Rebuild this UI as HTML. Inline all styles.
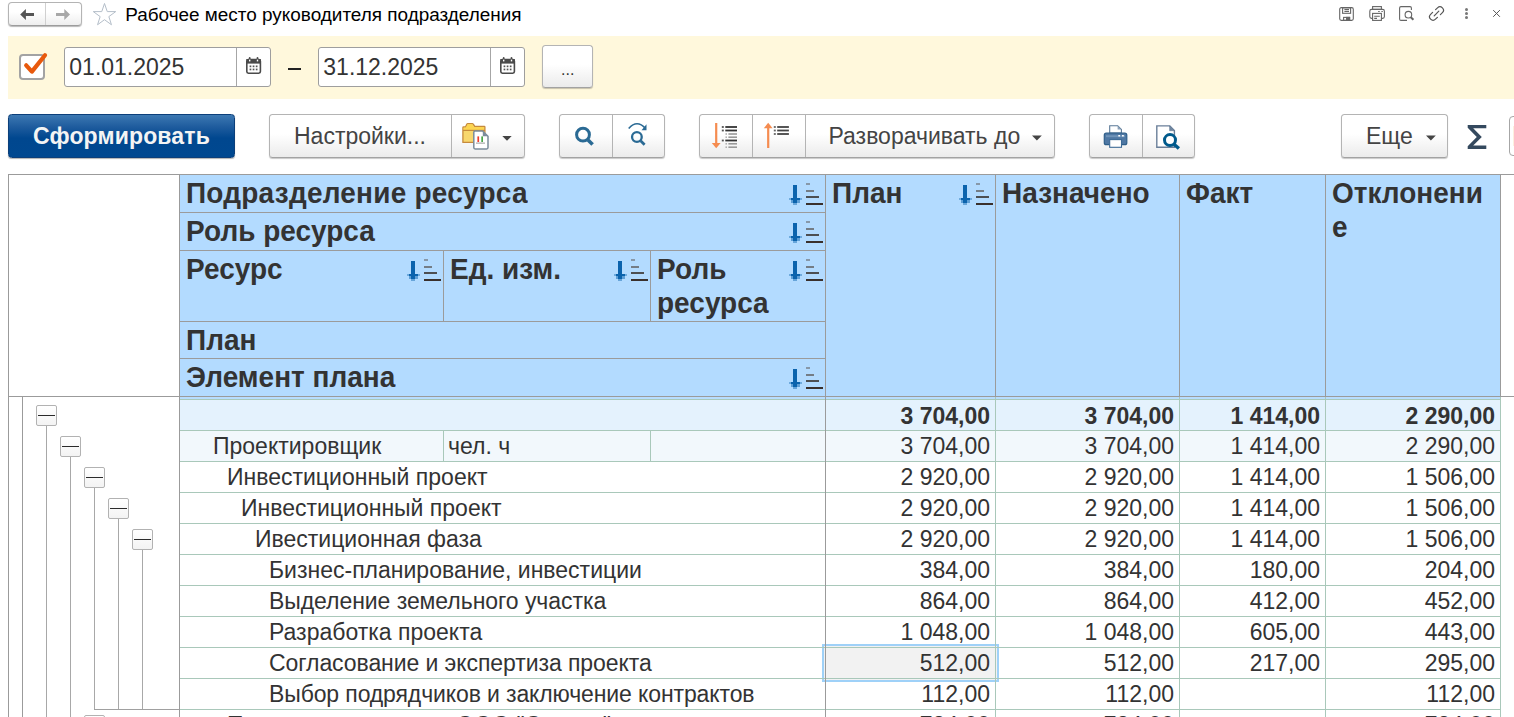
<!DOCTYPE html>
<html lang="ru"><head><meta charset="utf-8"><title>Рабочее место руководителя подразделения</title>
<style>
*{box-sizing:border-box;margin:0;padding:0}
html,body{width:1514px;height:717px;overflow:hidden;background:#fff}
body{position:relative;font-family:"Liberation Sans",sans-serif;font-size:23px;color:#333}
.abs{position:absolute}
.btn{position:absolute;top:114px;height:44px;border:1px solid #b4b4b4;border-bottom-color:#a2a2a2;border-radius:3.5px;background:linear-gradient(#ffffff 0%,#ffffff 45%,#ebebeb 100%);box-shadow:0 1px 1px rgba(0,0,0,.22)}
.btn .sep{position:absolute;top:0;bottom:0;width:1px;background:#b4b4b4}
.btn .t{position:absolute;top:0;height:42px;line-height:42px;white-space:nowrap;color:#444;font-size:23px}
.inp{position:absolute;top:47px;height:40px;background:#fff;border:1px solid #9e9e9e;border-radius:3px}
.inp .sep{position:absolute;top:0;bottom:0;width:1px;background:#a6a6a6}
.inp .t{position:absolute;left:4.3px;top:0;height:38px;line-height:38px;font-size:23px;color:#333;white-space:nowrap}
.hd{position:absolute;background:#b3dbff}
.ht{position:absolute;font-weight:bold;font-size:28px;line-height:38px;color:#333;white-space:nowrap;transform:scaleY(1.04);transform-origin:0 28px}
.ht[style*="line-height:34px"]{transform-origin:0 26px}
.vl{position:absolute;width:1px;background:#9b9b9b}
.hl{position:absolute;height:1px;background:#9b9b9b}
.gv{position:absolute;width:1px;background:#a9c8ba}
.gh{position:absolute;height:1px;background:#a9c8ba}
.tb{position:absolute;width:21px;height:21px;border:1px solid #b2b2b2;border-radius:2px;background:linear-gradient(#fff,#f3f3f3)}
.tb i{position:absolute;left:1px;right:1px;top:9px;height:1px;background:#2a2a2a}
.rt{position:absolute;height:31px;line-height:31px;font-size:23px;white-space:nowrap;color:#333}
.num{text-align:right}
.b{font-weight:bold}
</style></head><body>

<!-- title bar -->
<div class="abs" style="left:8px;top:2px;width:74px;height:24px;border:1px solid #b4b4b4;border-bottom-color:#9c9c9c;border-radius:4px;background:linear-gradient(#fff 40%,#eee);box-shadow:0 1px 1px rgba(0,0,0,.28)">
<div class="abs" style="left:36px;top:0;bottom:0;width:1px;background:#d0d0d0"></div>
<svg class="abs" style="left:0;top:0" width="72" height="22" viewBox="9 3 72 22"><path d="M20.2 14.4L25.9 9v3.9H34v3.1H25.9V20z" fill="#555"/><path d="M70 14.4L64.3 9v3.9H56v3.1h8.3V20z" fill="#a8a8a8"/></svg>
</div>
<svg class="abs" style="left:91px;top:1px" width="27" height="27" viewBox="91 1.7 27 27"><path d="M104.5 4.2l2.75 8.1h8.45l-6.85 5 2.6 8.15-6.95-5.05-6.95 5.05 2.6-8.15-6.85-5h8.45z" fill="#fff" stroke="#b4bec9" stroke-width="1"/></svg>
<div class="abs" style="left:125.2px;top:3px;height:24px;line-height:24px;font-size:18.93px;color:#000;white-space:nowrap">Рабочее место руководителя подразделения</div>

<svg class="abs" style="left:1334px;top:2px" width="176" height="24" viewBox="1334 2 176 24" fill="none" stroke="#666" stroke-width="1.1">
<rect x="1339.7" y="7.6" width="13.6" height="12.8" rx="1.6"/><rect x="1342.6" y="7.8" width="8" height="5.5"/><path d="M1344.4 9.6h4.6M1344.4 11.5h4.6"/><rect x="1343.6" y="17.4" width="6" height="3"/><rect x="1346.6" y="17.4" width="3" height="3" fill="#666"/>
<rect x="1372.6" y="6.6" width="8.8" height="2.8"/><rect x="1369.8" y="9.4" width="14.6" height="9" rx="1.8"/><rect x="1372.6" y="13.4" width="8.8" height="7" fill="#fff"/><path d="M1374.2 16.3h5.6M1374.2 18.4h2.8M1378.2 11.5h1.5M1381.4 11.5h1.4"/>
<path d="M1411.4 10V8q0-1.4-1.4-1.4h-9q-1.4 0-1.4 1.4v11q0 1.4 1.4 1.4h6"/><circle cx="1408.4" cy="14.7" r="3.3"/><path d="M1410.8 17.2l2.6 2.5" stroke-width="2"/>
<path d="M1435.6 9.7l1.9-1.9a3.4 3.4 0 0 1 4.9 4.9l-2 2M1437.4 17.3l-1.9 1.9a3.4 3.4 0 0 1-4.9-4.9l2-2M1434.2 15.8l4.6-4.6" stroke="#555" stroke-width="1.2" stroke-linecap="round"/>
<g fill="#777" stroke="none"><circle cx="1466.5" cy="9.4" r="1.5"/><circle cx="1466.5" cy="13.5" r="1.5"/><circle cx="1466.5" cy="17.6" r="1.5"/></g>
<path d="M1493.2 10.1l6.7 6.7M1499.9 10.1l-6.7 6.7" stroke="#555" stroke-width="1"/>
</svg>

<!-- period band -->
<div class="abs" style="left:8px;top:36px;width:1506px;height:63px;background:#fff8dc"></div>
<div class="abs" style="left:19px;top:54px;width:26px;height:26px;border:2px solid #a3a3a3;border-radius:4px;background:#fff"></div>
<svg class="abs" style="left:19px;top:50px" width="32" height="32" viewBox="19 50 32 32"><path d="M26.2 65.3l5.7 6.3L45 55.2" fill="none" stroke="#e8590c" stroke-width="4.2" stroke-linecap="round" stroke-linejoin="round"/></svg>
<div class="inp" style="left:64px;width:207px"><div class="t">01.01.2025</div><div class="sep" style="left:171px"></div>
<svg class="abs" style="left:179px;top:8px" width="18" height="20" viewBox="244 56 18 20"><rect x="246.8" y="59.6" width="13.6" height="13.6" rx="1.6" fill="#fff" stroke="#4a4a4a" stroke-width="1.6"/><rect x="246.4" y="59" width="14.4" height="4.6" fill="#4a4a4a"/><rect x="248.8" y="57" width="1.8" height="3.2" rx=".9" fill="#4a4a4a"/><rect x="256.6" y="57" width="1.8" height="3.2" rx=".9" fill="#4a4a4a"/><rect x="249" y="59.6" width="1.4" height="1.8" fill="#fff"/><rect x="256.8" y="59.6" width="1.4" height="1.8" fill="#fff"/><g fill="#555"><rect x="249.6" y="65.5" width="1.7" height="1.7"/><rect x="252.7" y="65.5" width="1.7" height="1.7"/><rect x="255.8" y="65.5" width="1.7" height="1.7"/><rect x="249.6" y="68.6" width="1.7" height="1.7"/><rect x="252.7" y="68.6" width="1.7" height="1.7"/><rect x="255.8" y="68.6" width="1.7" height="1.7"/></g></svg></div>
<div class="abs" style="left:288px;top:68px;width:13px;height:2px;background:#222"></div>
<div class="inp" style="left:318px;width:207px"><div class="t">31.12.2025</div><div class="sep" style="left:171px"></div>
<svg class="abs" style="left:179px;top:8px" width="18" height="20" viewBox="244 56 18 20"><rect x="246.8" y="59.6" width="13.6" height="13.6" rx="1.6" fill="#fff" stroke="#4a4a4a" stroke-width="1.6"/><rect x="246.4" y="59" width="14.4" height="4.6" fill="#4a4a4a"/><rect x="248.8" y="57" width="1.8" height="3.2" rx=".9" fill="#4a4a4a"/><rect x="256.6" y="57" width="1.8" height="3.2" rx=".9" fill="#4a4a4a"/><rect x="249" y="59.6" width="1.4" height="1.8" fill="#fff"/><rect x="256.8" y="59.6" width="1.4" height="1.8" fill="#fff"/><g fill="#555"><rect x="249.6" y="65.5" width="1.7" height="1.7"/><rect x="252.7" y="65.5" width="1.7" height="1.7"/><rect x="255.8" y="65.5" width="1.7" height="1.7"/><rect x="249.6" y="68.6" width="1.7" height="1.7"/><rect x="252.7" y="68.6" width="1.7" height="1.7"/><rect x="255.8" y="68.6" width="1.7" height="1.7"/></g></svg></div>
<div class="btn" style="left:542px;top:45px;width:51px;height:43px"><div class="t" style="left:18px;top:5px;font-size:16px;line-height:38px;height:38px;color:#333">...</div></div>

<!-- command bar -->
<div class="abs" style="left:8px;top:114px;width:227px;height:44px;border:1px solid #0c3f7a;border-radius:3.5px;background:linear-gradient(#3c78b2 0%,#1f5c9e 28%,#00478f 55%,#004890 100%);box-shadow:0 1px 1px rgba(0,0,0,.3)"><div class="abs" style="left:0;right:0;top:0;height:42px;line-height:42px;text-align:center;color:#f4f4f4;font-weight:bold;font-size:23px;letter-spacing:.150px">Сформировать</div></div>
<div class="btn" style="left:269px;width:256px"><div class="t" style="left:24px">Настройки...</div><div class="sep" style="left:181px"></div>
<svg class="abs" style="left:190px;top:6px" width="56" height="32" viewBox="460 121 56 32"><path d="M462.9 142.4v-14.8q0-.6.6-.6h2l1.4-2.9q.3-.5.9-.5h4.6q.6 0 .9.5l1.4 2.2h9.6q.6 0 .6.6v15.5z" fill="#f8d76e" stroke="#c68a3c" stroke-width="1.3" stroke-linejoin="round"/><path d="M463.6 130.4v-2.8h2.4l1.6-3.3h4.5l1.7 2.7h10.1v3.4z" fill="#fcd550"/><path d="M463 130.4h22" stroke="#c68a3c" stroke-width="1.2"/><path d="M474 131h8.6l5.4 5.2v11.4q0 1.3-1.3 1.3h-11.6q-1.3 0-1.3-1.3v-15.3q0-1.3 1.3-1.3z" fill="#fff" stroke="#7b8c9b" stroke-width="1.5"/><path d="M482.8 131.2v5h5z" fill="#7b8c9b"/><rect x="477.4" y="136.4" width="1.7" height="5.6" fill="#ee3b2b"/><rect x="481.3" y="136.4" width="1.7" height="5.6" fill="#46a546"/><rect x="476" y="142.6" width="9" height="1" fill="#999"/><path d="M502.3 136.1h9.4l-4.7 4.7z" fill="#444"/></svg></div>
<div class="btn" style="left:559px;width:106px"><div class="sep" style="left:52px"></div>
<svg class="abs" style="left:0;top:0" width="104" height="42" viewBox="560 115 104 42" fill="none" stroke="#2a6a94"><circle cx="583" cy="134.7" r="6.4" stroke-width="3"/><path d="M588 139.9l4.6 4.6" stroke-width="3.6"/><circle cx="636.9" cy="137" r="4.85" stroke-width="2.3"/><path d="M640.6 140.8l4 4" stroke-width="2.8"/><path d="M628.7 128.5q8.3-9.5 16.8 0" stroke-width="1.6"/><path d="M646.5 124.2v6h-5z" fill="#2a6a94" stroke="none"/></svg></div>

<div class="btn" style="left:699px;width:356px"><div class="sep" style="left:52px"></div><div class="sep" style="left:105px"></div>
<svg class="abs" style="left:0;top:0" width="104" height="42" viewBox="700 115 104 42"><rect x="715.1" y="123" width="2.2" height="21" fill="#f58c50"/><path d="M711.8 143h8.8l-4.4 5.3z" fill="#f58c50"/><rect x="721.8" y="126.1" width="2" height="1.8" fill="#555"/><rect x="725.3" y="126.1" width="11.7" height="1.8" fill="#333"/><rect x="721.8" y="129.6" width="2" height="1.8" fill="#555"/><rect x="725.3" y="129.6" width="11.7" height="1.8" fill="#333"/><rect x="725.5" y="133.2" width="1.4" height="1.6" fill="#aaa"/><rect x="728.4" y="133.2" width="8.6" height="1.6" fill="#999"/><rect x="725.5" y="136.4" width="1.4" height="1.6" fill="#aaa"/><rect x="728.4" y="136.4" width="8.6" height="1.6" fill="#999"/><rect x="721.8" y="139.6" width="2" height="1.8" fill="#555"/><rect x="725.3" y="139.6" width="11.7" height="1.8" fill="#333"/><rect x="725.5" y="143" width="1.4" height="1.6" fill="#aaa"/><rect x="728.4" y="143" width="8.6" height="1.6" fill="#999"/><rect x="725.5" y="146.4" width="1.4" height="1.6" fill="#aaa"/><rect x="728.4" y="146.4" width="8.6" height="1.6" fill="#999"/><rect x="767.1" y="127.5" width="2.2" height="20.5" fill="#f58c50"/><path d="M763.8 128.3h8.8l-4.4-5.5z" fill="#f58c50"/><rect x="773.8" y="126.1" width="2" height="1.8" fill="#666"/><rect x="777.1999999999999" y="126.1" width="11.7" height="1.8" fill="#444"/><rect x="773.8" y="129.6" width="2" height="1.8" fill="#666"/><rect x="777.1999999999999" y="129.6" width="11.7" height="1.8" fill="#444"/><rect x="773.8" y="133.1" width="2" height="1.8" fill="#666"/><rect x="777.1999999999999" y="133.1" width="11.7" height="1.8" fill="#444"/></svg>
<div class="t" style="left:128.5px">Разворачивать до</div>
<svg class="abs" style="left:331px;top:20px" width="12" height="7" viewBox="0 0 12 7"><path d="M1 .600h9.8l-4.9 5z" fill="#444"/></svg></div>

<div class="btn" style="left:1089px;width:106px"><div class="sep" style="left:52px"></div>
<svg class="abs" style="left:0;top:0" width="104" height="42" viewBox="1090 115 104 42"><path d="M1109.7 133v-7.3h8l3.7 3.7v3.6z" fill="#fff" stroke="#5a7896" stroke-width="1.1"/><path d="M1117.6 125.8v3.7h3.7z" fill="#8aa0b8"/><rect x="1104.3" y="133.2" width="22.5" height="11.5" rx="2" fill="#4f78a4" stroke="#2f5f8a" stroke-width="1.2"/><rect x="1106" y="135.2" width="19" height="2" fill="#7fa0c2" opacity=".7"/><rect x="1118.3" y="135" width="1.8" height="1.5" fill="#fff"/><rect x="1122" y="135" width="1.8" height="1.5" fill="#fff"/><rect x="1109.7" y="139.6" width="11.8" height="7.7" fill="#fff" stroke="#3d6a96" stroke-width="1.1"/>
<path d="M1156.8 125.9h13l4.6 4.6v16.7h-17.6z" fill="#fff" stroke="#6a7f99" stroke-width="1.4"/><path d="M1169.6 125.9v4.8h4.8z" fill="#6f86a0" stroke="#6a7f99" stroke-width=".6"/><circle cx="1170" cy="140.1" r="5.5" fill="#fff" stroke="#005a8c" stroke-width="3"/><path d="M1174.3 144.5l4.6 4" stroke="#005a8c" stroke-width="3.4"/></svg></div>
<div class="btn" style="left:1341px;width:107px"><div class="t" style="left:24px">Еще</div><svg class="abs" style="left:83px;top:20px" width="12" height="7" viewBox="0 0 12 7"><path d="M1 .600h9.8l-4.9 5z" fill="#444"/></svg></div>
<svg class="abs" style="left:1464px;top:121px" width="26" height="32" viewBox="1464 121 26 32"><path d="M1467.7 124.9h18.6v3.4h-13.1l8.6 8.65-8.6 8.65h13.1v3.4h-18.6v-2.8l9.1-9.25-9.1-9.25z" fill="#34495e"/></svg>
<div class="abs" style="left:1509px;top:116px;width:20px;height:40px;border:1px solid #a6a6a6;border-radius:4px;background:#fff"><div class="abs" style="left:3px;top:9px;width:20px;height:20px;background:#fdf0df"></div></div>

<!-- table header -->
<div class="hd" style="left:180px;top:175px;width:1320px;height:222px"></div>
<div class="hd" style="left:180px;top:397px;width:1320px;height:2px;background:#b7ddff"></div>

<div class="hl" style="left:8px;top:174px;width:1506px"></div>
<div class="hl" style="left:8px;top:396px;width:1506px"></div>
<div class="hl" style="left:179px;top:212px;width:647px"></div>
<div class="hl" style="left:179px;top:250px;width:647px"></div>
<div class="hl" style="left:179px;top:321px;width:647px"></div>
<div class="hl" style="left:179px;top:358px;width:647px"></div>
<div class="vl" style="left:8px;top:174px;height:543px"></div>
<div class="vl" style="left:22px;top:396px;height:321px"></div>
<div class="vl" style="left:179px;top:174px;height:543px"></div>
<div class="vl" style="left:825px;top:174px;height:543px"></div>
<div class="vl" style="left:995px;top:174px;height:223px"></div>
<div class="vl" style="left:1179px;top:174px;height:223px"></div>
<div class="vl" style="left:1325px;top:174px;height:223px"></div>
<div class="vl" style="left:1500px;top:174px;height:223px"></div>
<div class="vl" style="left:443px;top:250px;height:71px"></div>
<div class="vl" style="left:650px;top:250px;height:71px"></div>
<div class="ht" style="left:186px;top:175px;letter-spacing:.22px">Подразделение ресурса</div><svg class="abs" style="left:788px;top:182px" width="36" height="24" viewBox="0 0 36 24" shape-rendering="crispEdges"><g fill="#0b63ad"><rect x="5" y="3" width="4" height="18"/><rect x="5" y="21" width="4" height="2" opacity=".45"/><rect x="3" y="16" width="9" height="2"/><rect x="1" y="16" width="2" height="2" opacity=".4"/><rect x="12" y="16" width="2" height="2" opacity=".4"/><rect x="3" y="18" width="9" height="3" opacity=".5"/></g><rect x="18" y="1" width="4" height="2" fill="#8798a9"/><rect x="18" y="8" width="8" height="2" fill="#747d86"/><rect x="18" y="14" width="13" height="2" fill="#4d4f52"/><rect x="18" y="21" width="17" height="2" fill="#3a302c"/></svg>
<div class="ht" style="left:186px;top:213px">Роль ресурса</div><svg class="abs" style="left:788px;top:220px" width="36" height="24" viewBox="0 0 36 24" shape-rendering="crispEdges"><g fill="#0b63ad"><rect x="5" y="3" width="4" height="18"/><rect x="5" y="21" width="4" height="2" opacity=".45"/><rect x="3" y="16" width="9" height="2"/><rect x="1" y="16" width="2" height="2" opacity=".4"/><rect x="12" y="16" width="2" height="2" opacity=".4"/><rect x="3" y="18" width="9" height="3" opacity=".5"/></g><rect x="18" y="1" width="4" height="2" fill="#8798a9"/><rect x="18" y="8" width="8" height="2" fill="#747d86"/><rect x="18" y="14" width="13" height="2" fill="#4d4f52"/><rect x="18" y="21" width="17" height="2" fill="#3a302c"/></svg>
<div class="ht" style="left:186px;top:253px;line-height:34px">Ресурс</div><svg class="abs" style="left:406px;top:258px" width="36" height="24" viewBox="0 0 36 24" shape-rendering="crispEdges"><g fill="#0b63ad"><rect x="5" y="3" width="4" height="18"/><rect x="5" y="21" width="4" height="2" opacity=".45"/><rect x="3" y="16" width="9" height="2"/><rect x="1" y="16" width="2" height="2" opacity=".4"/><rect x="12" y="16" width="2" height="2" opacity=".4"/><rect x="3" y="18" width="9" height="3" opacity=".5"/></g><rect x="18" y="1" width="4" height="2" fill="#8798a9"/><rect x="18" y="8" width="8" height="2" fill="#747d86"/><rect x="18" y="14" width="13" height="2" fill="#4d4f52"/><rect x="18" y="21" width="17" height="2" fill="#3a302c"/></svg>
<div class="ht" style="left:450px;top:253px;line-height:34px">Ед. изм.</div><svg class="abs" style="left:613px;top:258px" width="36" height="24" viewBox="0 0 36 24" shape-rendering="crispEdges"><g fill="#0b63ad"><rect x="5" y="3" width="4" height="18"/><rect x="5" y="21" width="4" height="2" opacity=".45"/><rect x="3" y="16" width="9" height="2"/><rect x="1" y="16" width="2" height="2" opacity=".4"/><rect x="12" y="16" width="2" height="2" opacity=".4"/><rect x="3" y="18" width="9" height="3" opacity=".5"/></g><rect x="18" y="1" width="4" height="2" fill="#8798a9"/><rect x="18" y="8" width="8" height="2" fill="#747d86"/><rect x="18" y="14" width="13" height="2" fill="#4d4f52"/><rect x="18" y="21" width="17" height="2" fill="#3a302c"/></svg>
<div class="ht" style="left:657px;top:253px;line-height:34px">Роль</div><div class="ht" style="left:657px;top:287px;line-height:34px">ресурса</div><svg class="abs" style="left:788px;top:258px" width="36" height="24" viewBox="0 0 36 24" shape-rendering="crispEdges"><g fill="#0b63ad"><rect x="5" y="3" width="4" height="18"/><rect x="5" y="21" width="4" height="2" opacity=".45"/><rect x="3" y="16" width="9" height="2"/><rect x="1" y="16" width="2" height="2" opacity=".4"/><rect x="12" y="16" width="2" height="2" opacity=".4"/><rect x="3" y="18" width="9" height="3" opacity=".5"/></g><rect x="18" y="1" width="4" height="2" fill="#8798a9"/><rect x="18" y="8" width="8" height="2" fill="#747d86"/><rect x="18" y="14" width="13" height="2" fill="#4d4f52"/><rect x="18" y="21" width="17" height="2" fill="#3a302c"/></svg>
<div class="ht" style="left:186px;top:322px">План</div>
<div class="ht" style="left:186px;top:359px">Элемент плана</div><svg class="abs" style="left:788px;top:366px" width="36" height="24" viewBox="0 0 36 24" shape-rendering="crispEdges"><g fill="#0b63ad"><rect x="5" y="3" width="4" height="18"/><rect x="5" y="21" width="4" height="2" opacity=".45"/><rect x="3" y="16" width="9" height="2"/><rect x="1" y="16" width="2" height="2" opacity=".4"/><rect x="12" y="16" width="2" height="2" opacity=".4"/><rect x="3" y="18" width="9" height="3" opacity=".5"/></g><rect x="18" y="1" width="4" height="2" fill="#8798a9"/><rect x="18" y="8" width="8" height="2" fill="#747d86"/><rect x="18" y="14" width="13" height="2" fill="#4d4f52"/><rect x="18" y="21" width="17" height="2" fill="#3a302c"/></svg>
<div class="ht" style="left:832px;top:175px">План</div><svg class="abs" style="left:958px;top:182px" width="36" height="24" viewBox="0 0 36 24" shape-rendering="crispEdges"><g fill="#0b63ad"><rect x="5" y="3" width="4" height="18"/><rect x="5" y="21" width="4" height="2" opacity=".45"/><rect x="3" y="16" width="9" height="2"/><rect x="1" y="16" width="2" height="2" opacity=".4"/><rect x="12" y="16" width="2" height="2" opacity=".4"/><rect x="3" y="18" width="9" height="3" opacity=".5"/></g><rect x="18" y="1" width="4" height="2" fill="#8798a9"/><rect x="18" y="8" width="8" height="2" fill="#747d86"/><rect x="18" y="14" width="13" height="2" fill="#4d4f52"/><rect x="18" y="21" width="17" height="2" fill="#3a302c"/></svg>
<div class="ht" style="left:1002px;top:175px">Назначено</div>
<div class="ht" style="left:1186px;top:175px">Факт</div>
<div class="ht" style="left:1332px;top:177px;line-height:34px">Отклонени</div><div class="ht" style="left:1332px;top:211px;line-height:34px">е</div>
<!-- data rows -->
<div class="abs" style="left:180px;top:400px;width:1320px;height:30px;background:#e4f2fd"></div>
<div class="abs" style="left:180px;top:431px;width:1320px;height:30px;background:#f2f8fc"></div>
<div class="abs" style="left:822px;top:644px;width:177px;height:38px;border:2px solid #9fd1f8;background:#f2f2f2"></div>
<div class="gh" style="left:180px;top:399px;width:1320px"></div>
<div class="gh" style="left:180px;top:430px;width:1320px"></div>
<div class="gh" style="left:180px;top:461px;width:1320px"></div>
<div class="gh" style="left:180px;top:492px;width:1320px"></div>
<div class="gh" style="left:180px;top:523px;width:1320px"></div>
<div class="gh" style="left:180px;top:554px;width:1320px"></div>
<div class="gh" style="left:180px;top:585px;width:1320px"></div>
<div class="gh" style="left:180px;top:616px;width:1320px"></div>
<div class="gh" style="left:180px;top:647px;width:1320px"></div>
<div class="gh" style="left:180px;top:678px;width:1320px"></div>
<div class="gh" style="left:180px;top:709px;width:1320px"></div>
<div class="gv" style="left:995px;top:397px;height:320px"></div>
<div class="gv" style="left:1179px;top:397px;height:320px"></div>
<div class="gv" style="left:1325px;top:397px;height:320px"></div>
<div class="gv" style="left:1500px;top:397px;height:320px"></div>
<div class="gv" style="left:443px;top:430px;height:31px"></div>
<div class="gv" style="left:650px;top:430px;height:31px"></div>
<div class="vl" style="left:825px;top:397px;height:320px"></div>
<div class="rt b num" style="left:826px;top:401px;width:164px">3 704,00</div>
<div class="rt b num" style="left:996px;top:401px;width:178px">3 704,00</div>
<div class="rt b num" style="left:1180px;top:401px;width:140px">1 414,00</div>
<div class="rt b num" style="left:1326px;top:401px;width:169px">2 290,00</div>
<div class="rt" style="left:213px;top:431px">Проектировщик</div>
<div class="rt" style="left:448px;top:431px">чел. ч</div>
<div class="rt num" style="left:826px;top:431px;width:164px">3 704,00</div>
<div class="rt num" style="left:996px;top:431px;width:178px">3 704,00</div>
<div class="rt num" style="left:1180px;top:431px;width:140px">1 414,00</div>
<div class="rt num" style="left:1326px;top:431px;width:169px">2 290,00</div>
<div class="rt" style="left:227px;top:462px">Инвестиционный проект</div>
<div class="rt num" style="left:826px;top:462px;width:164px">2 920,00</div>
<div class="rt num" style="left:996px;top:462px;width:178px">2 920,00</div>
<div class="rt num" style="left:1180px;top:462px;width:140px">1 414,00</div>
<div class="rt num" style="left:1326px;top:462px;width:169px">1 506,00</div>
<div class="rt" style="left:241px;top:493px">Инвестиционный проект</div>
<div class="rt num" style="left:826px;top:493px;width:164px">2 920,00</div>
<div class="rt num" style="left:996px;top:493px;width:178px">2 920,00</div>
<div class="rt num" style="left:1180px;top:493px;width:140px">1 414,00</div>
<div class="rt num" style="left:1326px;top:493px;width:169px">1 506,00</div>
<div class="rt" style="left:255px;top:524px">Ивестиционная фаза</div>
<div class="rt num" style="left:826px;top:524px;width:164px">2 920,00</div>
<div class="rt num" style="left:996px;top:524px;width:178px">2 920,00</div>
<div class="rt num" style="left:1180px;top:524px;width:140px">1 414,00</div>
<div class="rt num" style="left:1326px;top:524px;width:169px">1 506,00</div>
<div class="rt" style="left:269px;top:555px">Бизнес-планирование, инвестиции</div>
<div class="rt num" style="left:826px;top:555px;width:164px">384,00</div>
<div class="rt num" style="left:996px;top:555px;width:178px">384,00</div>
<div class="rt num" style="left:1180px;top:555px;width:140px">180,00</div>
<div class="rt num" style="left:1326px;top:555px;width:169px">204,00</div>
<div class="rt" style="left:269px;top:586px;letter-spacing:-.06px">Выделение земельного участка</div>
<div class="rt num" style="left:826px;top:586px;width:164px">864,00</div>
<div class="rt num" style="left:996px;top:586px;width:178px">864,00</div>
<div class="rt num" style="left:1180px;top:586px;width:140px">412,00</div>
<div class="rt num" style="left:1326px;top:586px;width:169px">452,00</div>
<div class="rt" style="left:269px;top:617px">Разработка проекта</div>
<div class="rt num" style="left:826px;top:617px;width:164px">1 048,00</div>
<div class="rt num" style="left:996px;top:617px;width:178px">1 048,00</div>
<div class="rt num" style="left:1180px;top:617px;width:140px">605,00</div>
<div class="rt num" style="left:1326px;top:617px;width:169px">443,00</div>
<div class="rt" style="left:269px;top:648px;letter-spacing:-.078px">Согласование и экспертиза проекта</div>
<div class="rt num" style="left:826px;top:648px;width:164px">512,00</div>
<div class="rt num" style="left:996px;top:648px;width:178px">512,00</div>
<div class="rt num" style="left:1180px;top:648px;width:140px">217,00</div>
<div class="rt num" style="left:1326px;top:648px;width:169px">295,00</div>
<div class="rt" style="left:269px;top:679px;letter-spacing:-.118px">Выбор подрядчиков и заключение контрактов</div>
<div class="rt num" style="left:826px;top:679px;width:164px">112,00</div>
<div class="rt num" style="left:996px;top:679px;width:178px">112,00</div>
<div class="rt num" style="left:1326px;top:679px;width:169px">112,00</div>
<div class="rt" style="left:227px;top:710px">Проектирование для ООО &quot;Страна&quot;</div>
<div class="rt num" style="left:826px;top:710px;width:164px">784,00</div>
<div class="rt num" style="left:996px;top:710px;width:178px">784,00</div>
<div class="rt num" style="left:1326px;top:710px;width:169px">784,00</div>
<!-- tree -->
<div class="vl" style="left:46px;top:426px;height:291px;background:#a8a8a8"></div>
<div class="vl" style="left:70px;top:457px;height:260px;background:#a8a8a8"></div>
<div class="vl" style="left:94px;top:488px;height:221px;background:#a8a8a8"></div>
<div class="vl" style="left:118px;top:519px;height:190px;background:#a8a8a8"></div>
<div class="vl" style="left:142px;top:550px;height:159px;background:#a8a8a8"></div>
<div class="hl" style="left:94px;top:709px;width:85px;background:#a0a0a0"></div>
<div class="tb" style="left:36px;top:405px"><i></i></div>
<div class="tb" style="left:60px;top:436px"><i></i></div>
<div class="tb" style="left:84px;top:467px"><i></i></div>
<div class="tb" style="left:108px;top:498px"><i></i></div>
<div class="tb" style="left:132px;top:529px"><i></i></div>
<div class="tb" style="left:84px;top:715px"><i></i></div>
</body></html>
